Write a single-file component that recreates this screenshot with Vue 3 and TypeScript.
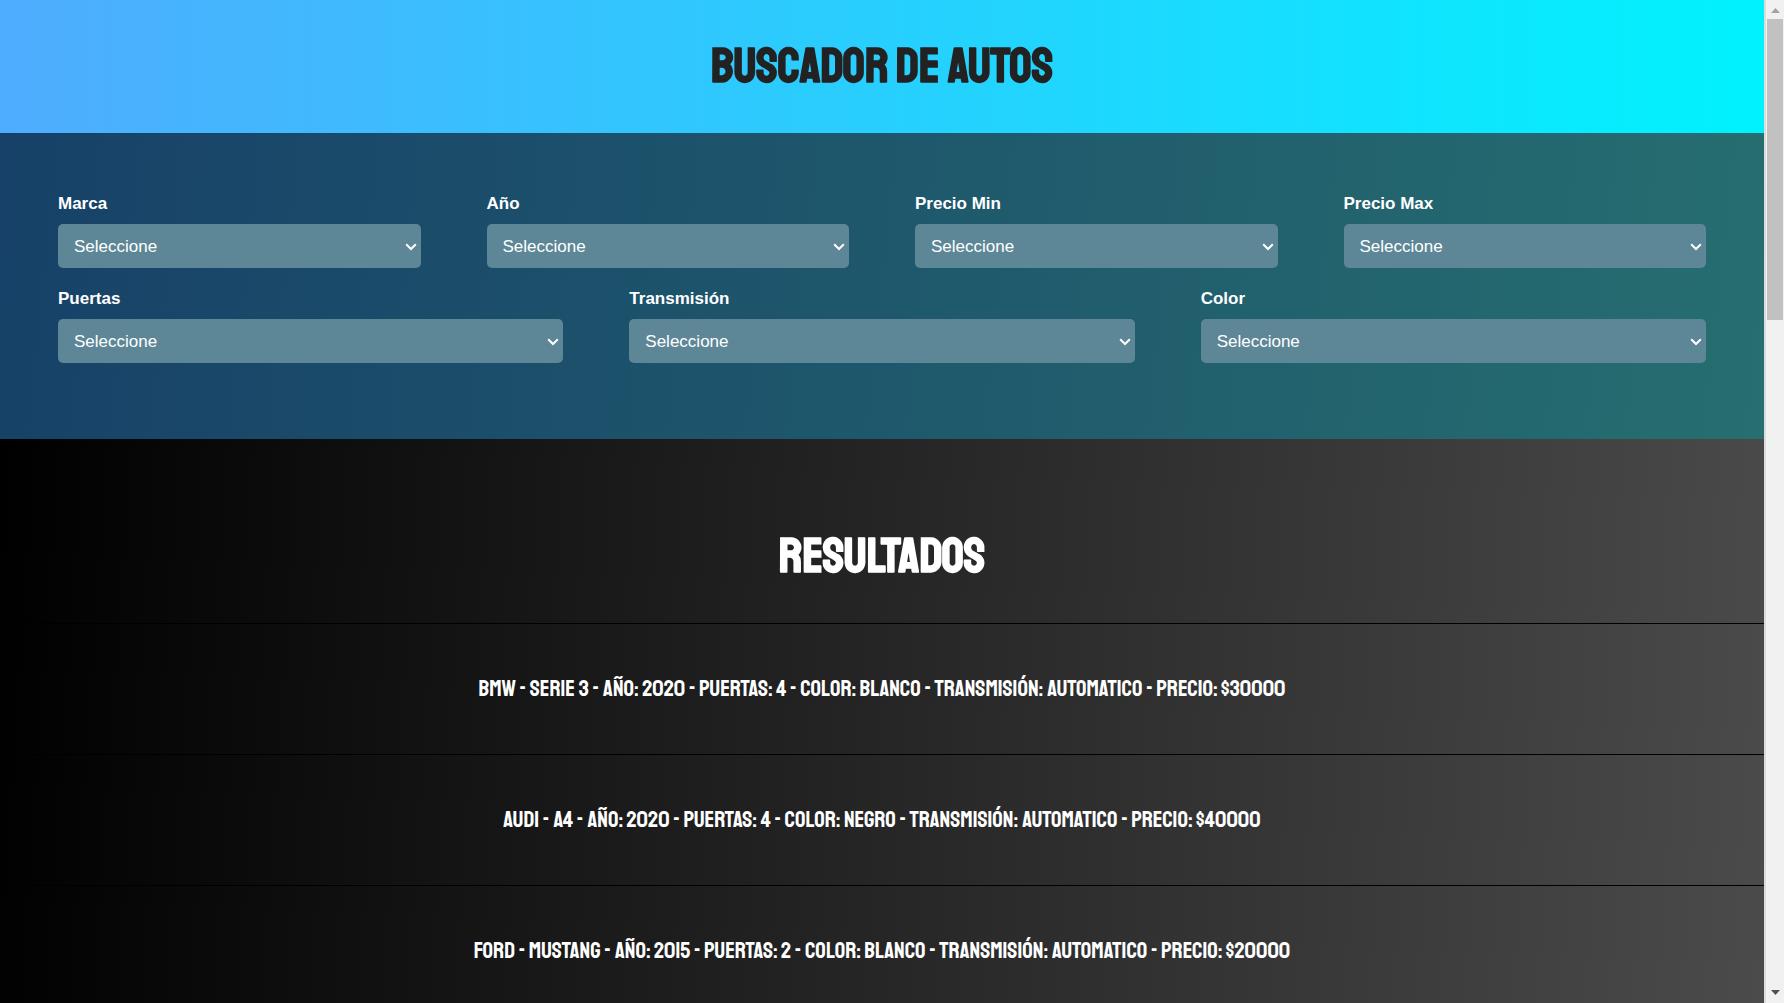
<script setup lang="ts">
import { ref } from 'vue'

interface Campo {
  id: string
  etiqueta: string
  opciones: string[]
}

interface Auto {
  marca: string
  modelo: string
  year: number
  puertas: number
  color: string
  transmision: string
  precio: number
}

const filas: Campo[][] = [
  [
    { id: 'marca', etiqueta: 'Marca', opciones: ['BMW', 'Audi', 'Ford'] },
    { id: 'year', etiqueta: 'Año', opciones: ['2020', '2015'] },
    { id: 'minimo', etiqueta: 'Precio Min', opciones: ['20000', '30000', '40000'] },
    { id: 'maximo', etiqueta: 'Precio Max', opciones: ['20000', '30000', '40000'] },
  ],
  [
    { id: 'puertas', etiqueta: 'Puertas', opciones: ['2', '4'] },
    { id: 'transmision', etiqueta: 'Transmisión', opciones: ['Automatico', 'Manual'] },
    { id: 'color', etiqueta: 'Color', opciones: ['Blanco', 'Negro'] },
  ],
]

const seleccion = ref<Record<string, string>>({
  marca: '', year: '', minimo: '', maximo: '', puertas: '', transmision: '', color: '',
})

const autos: Auto[] = [
  { marca: 'BMW', modelo: 'Serie 3', year: 2020, puertas: 4, color: 'Blanco', transmision: 'automatico', precio: 30000 },
  { marca: 'Audi', modelo: 'A4', year: 2020, puertas: 4, color: 'Negro', transmision: 'automatico', precio: 40000 },
  { marca: 'Ford', modelo: 'Mustang', year: 2015, puertas: 2, color: 'Blanco', transmision: 'automatico', precio: 20000 },
]

const describir = (a: Auto): string =>
  `${a.marca} - ${a.modelo} - Año: ${a.year} - Puertas: ${a.puertas} - Color: ${a.color} - Transmisión: ${a.transmision} - Precio: $${a.precio}`.toUpperCase()
</script>

<template>
  <div class="ventana">
    <div class="pagina">
      <header class="cabecera">
        <h1>BUSCADOR DE AUTOS</h1>
      </header>

      <form class="buscador">
        <div v-for="(fila, i) in filas" :key="i" class="fila">
          <div v-for="campo in fila" :key="campo.id" class="campo">
            <label :for="campo.id">{{ campo.etiqueta }}</label>
            <div class="caja">
              <select :id="campo.id" v-model="seleccion[campo.id]">
                <option value="">Seleccione</option>
                <option v-for="op in campo.opciones" :key="op" :value="op">{{ op }}</option>
              </select>
              <svg class="flecha" viewBox="0 0 12 8" aria-hidden="true">
                <path d="M1.2 1.2 6 6 10.8 1.2" fill="none" stroke="#fff" stroke-width="2" />
              </svg>
            </div>
          </div>
        </div>
      </form>

      <main class="resultados">
        <h2>RESULTADOS</h2>
        <p v-for="auto in autos" :key="auto.marca">{{ describir(auto) }}</p>
      </main>
    </div>

    <div class="barra" aria-hidden="true">
      <svg viewBox="0 0 9 5"><path d="M4.5 0 9 5H0z" fill="#a3a3a3" /></svg>
      <div class="pulgar"></div>
      <svg viewBox="0 0 9 5"><path d="M4.5 5 9 0H0z" fill="#505050" /></svg>
    </div>
  </div>
</template>

<style>
body {
  margin: 0;
}
</style>

<style scoped>
.ventana {
  display: flex;
  height: 100vh;
  overflow: hidden;
  font-family: "Liberation Sans", Arial, sans-serif;
}

.pagina {
  flex: 1;
  display: flex;
  flex-direction: column;
  min-width: 0;
  overflow: hidden;
}

.cabecera {
  flex: none;
  padding: 34px 0 35px;
  background: linear-gradient(to right, #4facfe 0%, #00f2fe 100%);
}

h1,
h2,
p {
  margin: 0;
  font-family: "Staatliches", "Bebas Neue", "Open Sans Condensed", sans-serif;
  font-weight: 400;
  text-align: center;
}

h1,
h2 {
  font-size: 49px;
  font-weight: 700;
  line-height: 64px;
}

h1 {
  color: #222;
}

.buscador {
  flex: none;
  display: flex;
  flex-direction: column;
  gap: 19px;
  padding: 59px 58px 76px;
  background: linear-gradient(96deg, #174168 0%, #266e70 100%);
}

.fila {
  display: flex;
  gap: 66px;
}

.campo {
  flex: 1;
  min-width: 0;
}

label {
  display: block;
  margin-bottom: 8px;
  font-size: 17px;
  font-weight: 700;
  line-height: 24px;
  color: #fff;
}

.caja {
  position: relative;
}

select {
  display: block;
  width: 100%;
  height: 44px;
  padding: 0 16px;
  border: 0;
  border-radius: 5px;
  appearance: none;
  background: #5d8797;
  color: #fff;
  font-family: inherit;
  font-size: 17px;
}

option {
  color: #222;
}

.flecha {
  position: absolute;
  top: 19px;
  right: 4px;
  width: 12px;
  height: 8px;
  pointer-events: none;
}

.resultados {
  flex: 1 0 auto;
  padding-top: 85px;
  background: linear-gradient(94deg, #000 0%, #4b4b4b 100%);
  color: #fff;
}

h2 {
  padding-bottom: 35px;
}

p {
  padding: 50px 0;
  border-top: 1px solid #000;
  font-size: 23px;
  line-height: 30px;
}

.barra {
  flex: none;
  display: flex;
  flex-direction: column;
  align-items: center;
  width: 18px;
  padding: 8px 0;
  border-left: 2px solid #dcdcdc;
  background: #f1f1f1;
}

.barra svg {
  flex: none;
  width: 9px;
  height: 5px;
}

.pulgar {
  width: 16px;
  height: 30vh;
  margin: 6px 0 auto;
  background: #c1c1c1;
}
</style>
